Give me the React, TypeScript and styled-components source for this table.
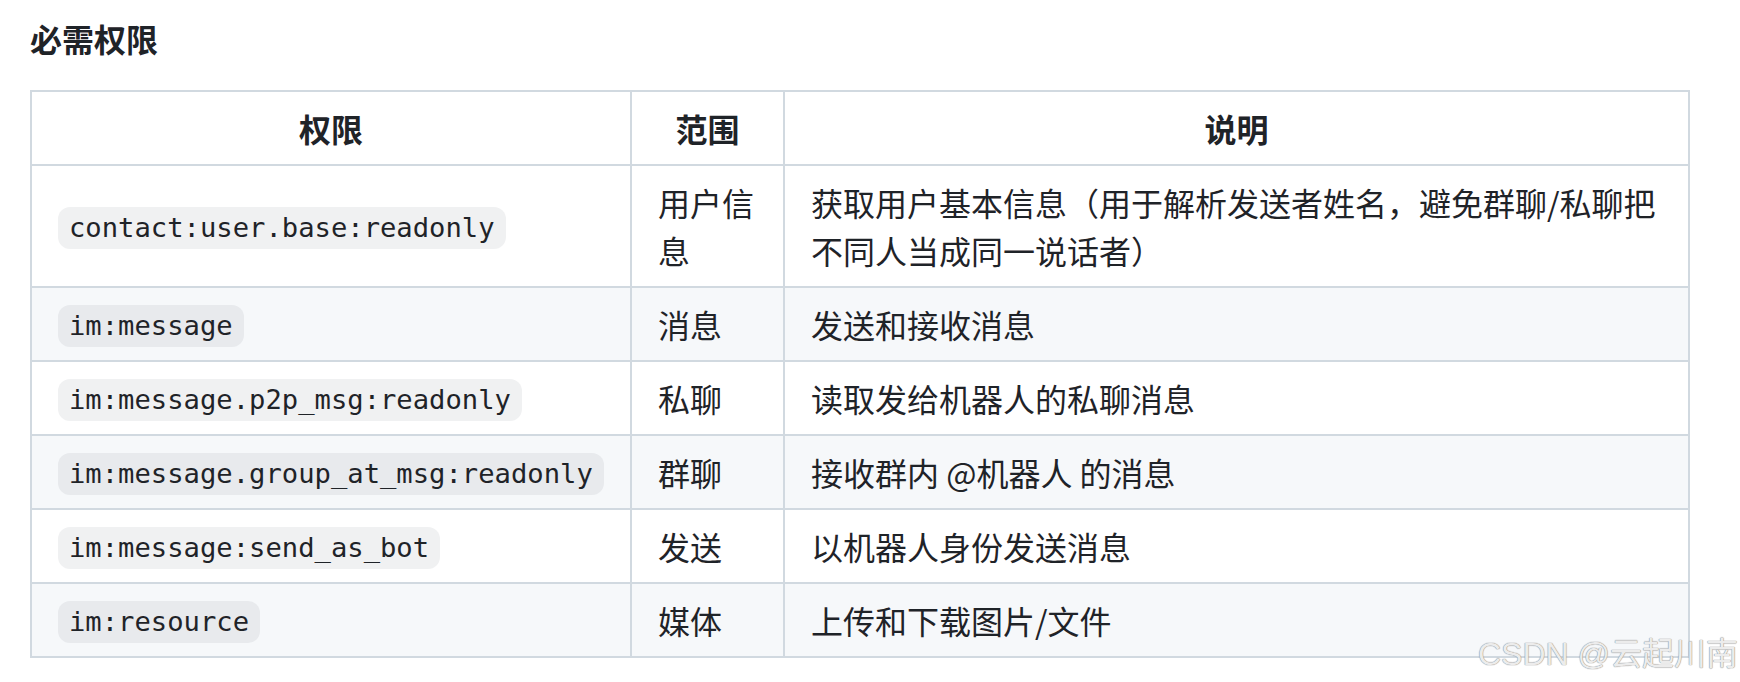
import React from 'react'
import styled, { createGlobalStyle } from 'styled-components'

const GlobalStyle = createGlobalStyle`
  html, body {
    margin: 0;
    padding: 0;
    background: #ffffff;
  }
  body {
    font-family: "Noto Sans", "Noto Sans CJK SC", sans-serif;
    color: #1f2328;
  }
`

const Page = styled.div`
  position: relative;
  width: 1740px;
  height: 682px;
  box-sizing: border-box;
  padding: 18px 0 0 30px;
  overflow: hidden;
`

const Heading = styled.h4`
  margin: 0 0 32px 0;
  font-size: 32px;
  line-height: 40px;
  font-weight: 700;
  font-family: "Noto Sans CJK SC", sans-serif;
  color: #1f2328;
`

const Table = styled.table`
  width: 1660px;
  table-layout: fixed;
  border-collapse: collapse;
  border-spacing: 0;
  font-size: 32px;
  line-height: 48px;
  font-family: "Noto Sans CJK SC", sans-serif;
`

const Row = styled.tr<{ $striped?: boolean }>`
  height: 74px;
  background: ${p => (p.$striped ? '#f6f8fa' : '#ffffff')};
`

const HeadCell = styled.th`
  border: 2px solid #d1d9e0;
  padding: 12px 26px;
  font-weight: 700;
  text-align: center;
  vertical-align: middle;
`

const Cell = styled.td`
  border: 2px solid #d1d9e0;
  padding: 12px 26px;
  vertical-align: middle;
  text-align: left;
`

// top-aligned inside the 48px line so it never grows the row
const Code = styled.code`
  display: inline-block;
  vertical-align: top;
  margin-top: 5px;
  font-family: "DejaVu Sans Mono", monospace;
  font-size: 27.2px;
  line-height: 32px;
  padding: 5px 11px;
  border-radius: 12px;
  background: rgba(129, 139, 152, 0.12);
  white-space: nowrap;
`

const Watermark = styled.div`
  position: absolute;
  right: 2px;
  bottom: 10px;
  font-family: "Liberation Sans", "Noto Sans CJK SC", sans-serif;
  font-size: 32px;
  line-height: 36px;
  color: #ececec;
  text-shadow: 0 0 1px #8a8a8a, 0 0 1px #8a8a8a;
  white-space: nowrap;
`

interface Permission {
  scope: string
  area: string
  desc: string
}

const rows: Permission[] = [
  { scope: 'contact:user.base:readonly', area: '用户信息', desc: '获取用户基本信息（用于解析发送者姓名，避免群聊/私聊把不同人当成同一说话者）' },
  { scope: 'im:message', area: '消息', desc: '发送和接收消息' },
  { scope: 'im:message.p2p_msg:readonly', area: '私聊', desc: '读取发给机器人的私聊消息' },
  { scope: 'im:message.group_at_msg:readonly', area: '群聊', desc: '接收群内 @机器人 的消息' },
  { scope: 'im:message:send_as_bot', area: '发送', desc: '以机器人身份发送消息' },
  { scope: 'im:resource', area: '媒体', desc: '上传和下载图片/文件' },
]

export default function App() {
  return (
    <Page>
      <GlobalStyle />
      <Heading>必需权限</Heading>
      <Table>
        <colgroup>
          <col style={{ width: 600 }} />
          <col style={{ width: 153 }} />
          <col style={{ width: 905 }} />
        </colgroup>
        <thead>
          <Row>
            <HeadCell>权限</HeadCell>
            <HeadCell>范围</HeadCell>
            <HeadCell>说明</HeadCell>
          </Row>
        </thead>
        <tbody>
          {rows.map((r, i) => (
            <Row key={r.scope} $striped={i % 2 === 1}>
              <Cell><Code>{r.scope}</Code></Cell>
              <Cell>{r.area}</Cell>
              <Cell>{r.desc}</Cell>
            </Row>
          ))}
        </tbody>
      </Table>
      <Watermark>CSDN @云起川南</Watermark>
    </Page>
  )
}
